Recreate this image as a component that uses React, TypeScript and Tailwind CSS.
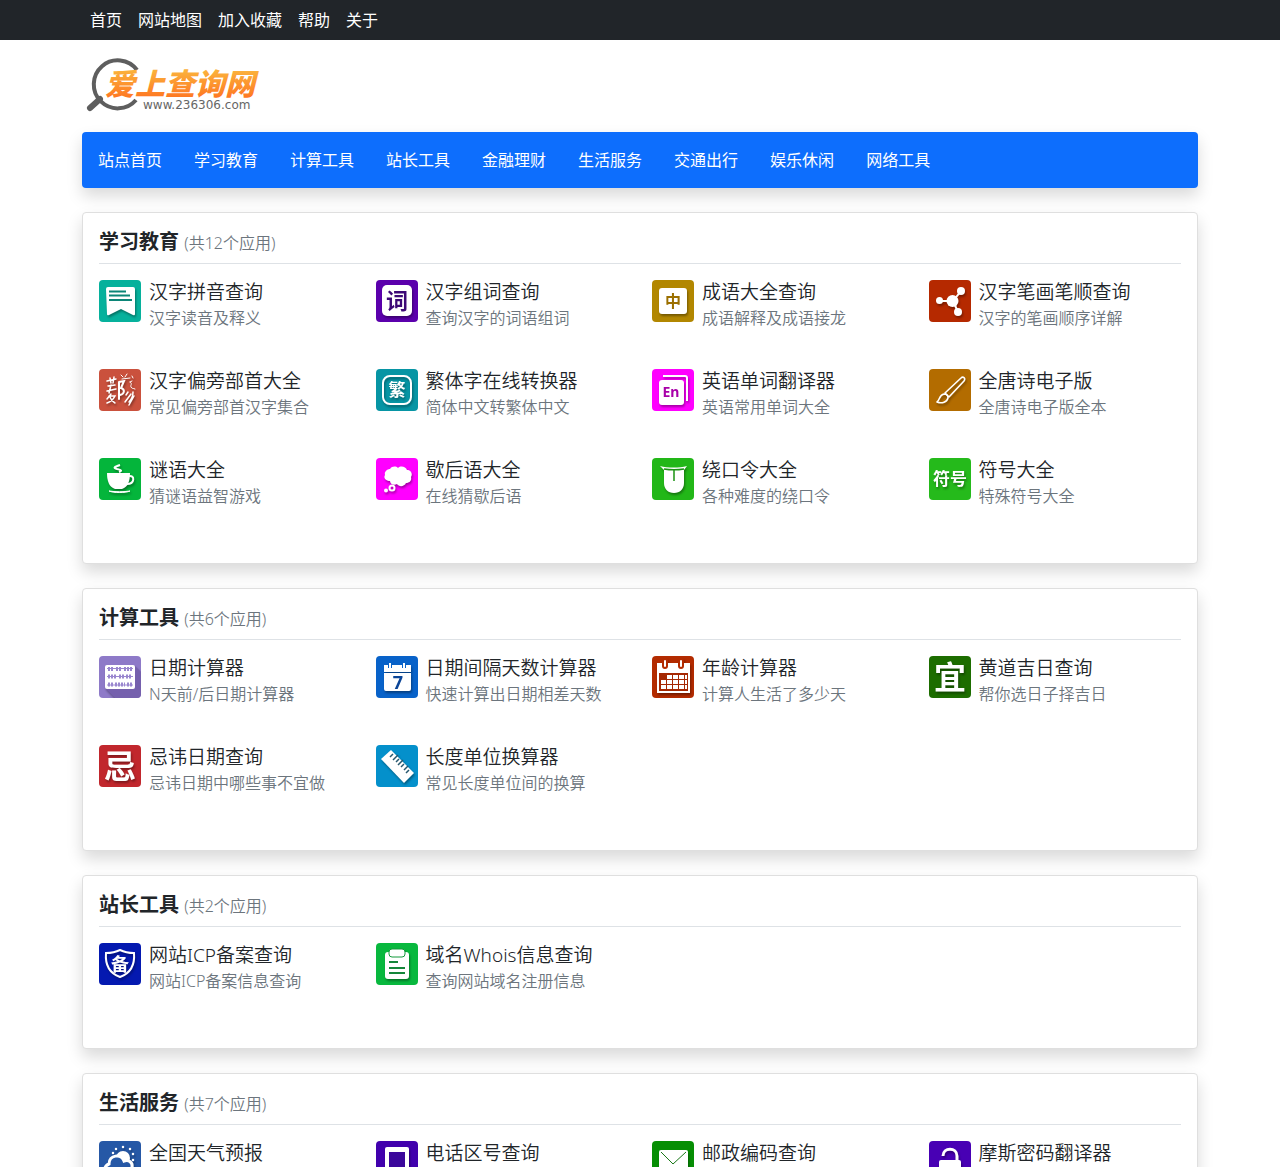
import { ReactNode } from "react";

interface Tool {
    name: string;
    desc?: string;
    icon: ReactNode;
    bg: string;
}

interface Category {
    title: string;
    count: number;
    tools: Tool[];
}

const topLinks = ["首页", "网站地图", "加入收藏", "帮助", "关于"];

const navLinks = ["站点首页", "学习教育", "计算工具", "站长工具", "金融理财", "生活服务", "交通出行", "娱乐休闲", "网络工具"];

/**
 * Single or double character centered in an icon tile
 */
function Glyph({ text, size, fill = "#fff", x = 21, y = 21 }: { text: string; size: number; fill?: string; x?: number; y?: number }) {
    return (
        <text x={x} y={y + size * 0.37} fontSize={size} fontWeight="700" fill={fill} textAnchor="middle">
            {text}
        </text>
    );
}

const categories: Category[] = [
    {
        title: "学习教育",
        count: 12,
        tools: [
            {
                name: "汉字拼音查询",
                desc: "汉字读音及释义",
                bg: "bg-[#06b19c]",
                icon: (
                    <>
                        <path d="M9 7h25a2 2 0 0 1 2 2v25q0 2-2 1l-12-6-12 6q-2 1-2-1l-1-25a2 2 0 0 1 2-2z" fill="#fff" />
                        <path d="M10 11.5h17M10 15.5h21M10 20h23" stroke="#0c8577" strokeWidth="2" />
                    </>
                ),
            },
            {
                name: "汉字组词查询",
                desc: "查询汉字的词语组词",
                bg: "bg-[#5b00ac]",
                icon: (
                    <>
                        <rect x="6" y="5" width="30" height="31" rx="5" fill="#fff" />
                        <Glyph text="词" size={22} fill="#3c0876" />
                    </>
                ),
            },
            {
                name: "成语大全查询",
                desc: "成语解释及成语接龙",
                bg: "bg-[#b28700]",
                icon: (
                    <>
                        <rect x="7" y="8" width="28" height="26" rx="3" fill="#fff" />
                        <Glyph text="中" size={16} fill="#9b6f00" />
                    </>
                ),
            },
            {
                name: "汉字笔画笔顺查询",
                desc: "汉字的笔画顺序详解",
                bg: "bg-[#b52900]",
                icon: (
                    <>
                        <path d="M10 21h14l8-10M24 21l5 11" stroke="#fff" strokeWidth="2" fill="none" />
                        <g fill="#fff">
                            <circle cx="23.500" cy="21" r="6" />
                            <circle cx="32" cy="11" r="4" />
                            <circle cx="10.500" cy="20.500" r="3.500" />
                            <circle cx="29" cy="32" r="4" />
                        </g>
                    </>
                ),
            },
            {
                name: "汉字偏旁部首大全",
                desc: "常见偏旁部首汉字集合",
                bg: "bg-[#ca513d]",
                icon: (
                    <g stroke="#fff" strokeWidth="1.500" fill="none" strokeLinecap="round">
                        <path d="M8 12l9-2M11 9l1 5M15 8l-1 6M9 17l7-1M8 22l9-2M12 16l-2 8" />
                        <path d="M12 25l-4 5M10 27h6c-2 4-5 6-8 7M11 28c1 3 3 5 5 6" />
                        <path d="M20 13v17M20 13l5-1-3 7c4 1 4 6-1 7" strokeWidth="2" />
                        <path d="M22 6l2 2M28 5l-2 3M23 10l8-1M33 7l1 2M31 13l2-1M31 13c3 2 0 3 1 5 1 2 2 1 4 2" strokeWidth="1" />
                        <path d="M29 23l-2 3M34 23c0 4-1 7-4 10M32 25l-6 8M35 27l-5 9" />
                    </g>
                ),
            },
            {
                name: "繁体字在线转换器",
                desc: "简体中文转繁体中文",
                bg: "bg-[#0795a4]",
                icon: (
                    <>
                        <rect x="7" y="7" width="28" height="28" rx="7" fill="none" stroke="#fff" strokeWidth="2" />
                        <Glyph text="繁" size={17} />
                    </>
                ),
            },
            {
                name: "英语单词翻译器",
                desc: "英语常用单词大全",
                bg: "bg-[#f0f]",
                icon: (
                    <>
                        <path d="M11 7h22a2 2 0 0 1 2 2v23" fill="none" stroke="#fff" strokeWidth="2" />
                        <rect x="7" y="11" width="25" height="25" rx="3" fill="#fff" />
                        <Glyph text="En" size={14} fill="#a800a8" x={19} y={23} />
                    </>
                ),
            },
            {
                name: "全唐诗电子版",
                desc: "全唐诗电子版全本",
                bg: "bg-[#b36c00]",
                icon: (
                    <g fill="none" stroke="#fff" strokeWidth="1.600" strokeLinejoin="round">
                        <path d="M16 24L32 9c2-2 5 0 3 3L20 28z" />
                        <path d="M15 25c3 0 4 2 4 4-1 4-6 6-11 4 3-2 2-7 7-8z" />
                    </g>
                ),
            },
            {
                name: "谜语大全",
                desc: "猜谜语益智游戏",
                bg: "bg-[#04b53b]",
                icon: (
                    <>
                        <path d="M8 15h23c0 8-2 14-8 16h-7c-6-2-8-8-8-16z" fill="#fff" />
                        <path d="M30 18c6-1 6 8-2 8" fill="none" stroke="#fff" strokeWidth="2" />
                        <path d="M21 7c-6 2-7 3-3 4 5 1 5 2 2 3" fill="none" stroke="#fff" strokeWidth="2" />
                        <path d="M10 33c6 1 15 1 21 0-4 2-17 2-21 0z" fill="#fff" stroke="#fff" />
                    </>
                ),
            },
            {
                name: "歇后语大全",
                desc: "在线猜歇后语",
                bg: "bg-[#f0f]",
                icon: (
                    <>
                        <path d="M14 11c2-3 6-3 8-1 3-3 8-1 9 2 4 0 6 4 4 7 1 4-2 6-5 6-2 4-7 4-9 1-3 2-7 0-7-3-4 0-7-3-5-6-1-3 2-6 5-6z" fill="#fff" />
                        <circle cx="16" cy="30" r="2.500" fill="none" stroke="#fff" strokeWidth="2" />
                        <circle cx="10" cy="32.500" r="2" fill="#fff" />
                    </>
                ),
            },
            {
                name: "绕口令大全",
                desc: "各种难度的绕口令",
                bg: "bg-[#22b718]",
                icon: (
                    <>
                        <path d="M8 8c8 2 19 2 27 0l-3 4v13c0 6-4 10-10 10s-10-4-10-10V12z" fill="#fff" />
                        <path d="M22 12v11M12 11c6 1 14 1 20 0" stroke="#1b9312" strokeWidth="1.500" fill="none" />
                    </>
                ),
            },
            {
                name: "符号大全",
                desc: "特殊符号大全",
                bg: "bg-[#25ba1b]",
                icon: <Glyph text="符号" size={17} />,
            },
        ],
    },
    {
        title: "计算工具",
        count: 6,
        tools: [
            {
                name: "日期计算器",
                desc: "N天前/后日期计算器",
                bg: "bg-[#8e7ac8]",
                icon: (
                    <>
                        <path d="M36 10l6 6v26H16l-9-9z" fill="#7560ad" />
                        <rect x="6" y="9" width="30" height="24" rx="2" fill="#fff" />
                        <path d="M8 12.500h26M8 20.500h26M8 29h26" stroke="#9a87cf" strokeWidth="1" />
                        <path d="M9 13h6M17 13h5M25 13h8M9 20.500h9M20 20.500h5M27 20.500h6M9 28.500h5M16 28.500h10M28 28.500h5" stroke="#9a87cf" strokeWidth="4" strokeDasharray="2 1" />
                    </>
                ),
            },
            {
                name: "日期间隔天数计算器",
                desc: "快速计算出日期相差天数",
                bg: "bg-[#0862c9]",
                icon: (
                    <>
                        <path d="M8 9h27v7H8zM8 17h27v16a2 2 0 0 1-2 2H10a2 2 0 0 1-2-2z" fill="#fff" />
                        <path d="M14 7v5M28 7v5" stroke="#0862c9" strokeWidth="4" />
                        <path d="M14 7v5M28 7v5" stroke="#fff" strokeWidth="2" />
                        <Glyph text="7" size={18} fill="#0b4597" x={22} y={26} />
                    </>
                ),
            },
            {
                name: "年龄计算器",
                desc: "计算人生活了多少天",
                bg: "bg-[#b32b00]",
                icon: (
                    <>
                        <path d="M5 7h33v30H5z" fill="#fff" />
                        <path d="M7 17h29v18H7z" fill="#a52802" />
                        <path d="M13 5v5M29 5v5" stroke="#b32b00" strokeWidth="6" strokeLinecap="round" />
                        <path d="M13 5v5M29 5v5" stroke="#fff" strokeWidth="2" strokeLinecap="round" />
                        <path d="M15 21h20M9 26h26M9 31h26" stroke="#fff" strokeWidth="4" strokeDasharray="5 1" />
                    </>
                ),
            },
            {
                name: "黄道吉日查询",
                desc: "帮你选日子择吉日",
                bg: "bg-[#1d6d00]",
                icon: <Glyph text="宜" size={32} />,
            },
            {
                name: "忌讳日期查询",
                desc: "忌讳日期中哪些事不宜做",
                bg: "bg-[#c1272d]",
                icon: <Glyph text="忌" size={32} />,
            },
            {
                name: "长度单位换算器",
                desc: "常见长度单位间的换算",
                bg: "bg-[#0490cb]",
                icon: (
                    <>
                        <path d="M5 14L15 5l23 23-10 10z" fill="#fff" />
                        <path d="M14 12l3-3M17 15l5-5M20 17l3-3M22 20l5-5M25 22l3-3M28 25l4-4M30 28l3-3" stroke="#26576e" strokeWidth="1.500" />
                    </>
                ),
            },
        ],
    },
    {
        title: "站长工具",
        count: 2,
        tools: [
            {
                name: "网站ICP备案查询",
                desc: "网站ICP备案信息查询",
                bg: "bg-[#0419b0]",
                icon: (
                    <>
                        <path d="M21 7c4 2 9 3 14 3 1 12-3 20-14 24C10 30 6 22 7 10c5 0 10-1 14-3z" fill="none" stroke="#fff" strokeWidth="2" />
                        <Glyph text="备" size={18} />
                    </>
                ),
            },
            {
                name: "域名Whois信息查询",
                desc: "查询网站域名注册信息",
                bg: "bg-[#08b83e]",
                icon: (
                    <>
                        <rect x="9" y="9" width="24" height="27" rx="3" fill="#fff" />
                        <rect x="13" y="6" width="16" height="8" rx="3" fill="#fff" stroke="#149a3d" />
                        <path d="M13 19h9M13 25h16M13 30h16" stroke="#15863a" strokeWidth="2" />
                    </>
                ),
            },
        ],
    },
    {
        title: "生活服务",
        count: 7,
        tools: [
            {
                name: "全国天气预报",
                bg: "bg-[#2658a6]",
                icon: (
                    <>
                        <path d="M24 6h0M17 8h0M31 8h0M14 12h0M34 13h0M34 19h0" stroke="#fff" strokeWidth="2.500" strokeLinecap="round" />
                        <circle cx="24" cy="17" r="7" fill="#fff" />
                        <path d="M9 34c-5-3-4-9 1-11 0-9 12-11 15-3 5-2 9 2 8 6 4 3 2 8-2 8z" fill="#2658a6" stroke="#fff" strokeWidth="3" />
                    </>
                ),
            },
            {
                name: "电话区号查询",
                bg: "bg-[#4100ad]",
                icon: (
                    <>
                        <rect x="9" y="6" width="24" height="34" rx="2" fill="#fff" />
                        <path d="M13 11h16v23H13z" fill="#3b079b" />
                    </>
                ),
            },
            {
                name: "邮政编码查询",
                bg: "bg-[#068e04]",
                icon: (
                    <>
                        <rect x="7" y="9" width="29" height="25" rx="2" fill="#fff" />
                        <path d="M9 11l12 12 13-12" fill="none" stroke="#197818" strokeWidth="1" />
                    </>
                ),
            },
            {
                name: "摩斯密码翻译器",
                bg: "bg-[#4800b4]",
                icon: (
                    <>
                        <path d="M14 15c0-9 14-9 14 0v4" fill="none" stroke="#fff" strokeWidth="3" />
                        <rect x="10" y="19" width="22" height="17" rx="2" fill="#fff" />
                    </>
                ),
            },
        ],
    },
];

function Logo() {
    return (
        <svg className="block w-[180px] h-[60px]" viewBox="0 0 180 60" role="img" aria-label="爱上查询网">
            <defs>
                <linearGradient id="logo-text" x1="0" y1="0" x2="0" y2="1">
                    <stop offset="0.200" stopColor="#fbb03b" />
                    <stop offset="1" stopColor="#ff6a1c" />
                </linearGradient>
            </defs>
            <path d="M55 14A24 24 0 1 0 54 44" fill="none" stroke="#5e5e5e" strokeWidth="4" />
            <path d="M18 43L8 52" stroke="#5e5e5e" strokeWidth="6" strokeLinecap="round" />
            <text x="23" y="39" fontSize="30" fontWeight="900" fontStyle="italic" fill="url(#logo-text)">
                爱上查询网
            </text>
            <text x="61" y="53" fontSize="12" fill="#666" className="font-['DejaVu_Sans']">
                www.236306.com
            </text>
        </svg>
    );
}

function ToolItem({ tool }: { tool: Tool }) {
    return (
        <a href="#" className="flex gap-2 pb-[39px]">
            <svg className={`w-[42px] h-[42px] shrink-0 rounded ${tool.bg}`} viewBox="0 0 42 42" aria-hidden="true">
                <g className="drop-shadow-[1px_2px_1px_rgba(0,0,0,0.35)]">{tool.icon}</g>
            </svg>
            <div className="min-w-0">
                <h3 className="text-[19px] leading-6 text-[#212529] font-[350]">{tool.name}</h3>
                {tool.desc && <p className="mt-0.5 leading-6 text-[#6c757d] font-[350]">{tool.desc}</p>}
            </div>
        </a>
    );
}

function CategoryCard({ category }: { category: Category }) {
    return (
        <section className="mb-6 p-4 pb-0 bg-white border border-[#dfdfdf] rounded shadow-[0_8px_16px_rgba(0,0,0,0.15)]">
            <h2 className="mb-4 pb-2 text-xl leading-[26px] font-bold border-b border-[#dee2e6]">
                {category.title} <small className="text-base leading-6 font-[350] text-[#6c757d]">(共{category.count}个应用)</small>
            </h2>
            <div className="grid grid-cols-4 gap-x-6 pb-4">
                {category.tools.map((tool) => (
                    <ToolItem key={tool.name} tool={tool} />
                ))}
            </div>
        </section>
    );
}

export default function App() {
    return (
        <div className="min-h-screen bg-white text-base text-[#212529] font-['Noto_Sans','Noto_Sans_CJK_SC',sans-serif]">
            <div className="bg-[#212529]">
                <div className="max-w-[1140px] mx-auto px-3">
                    <div className="flex h-10 items-center">
                        {topLinks.map((link) => (
                            <a key={link} href="#" className="px-2 leading-6 text-white">{link}</a>
                        ))}
                    </div>
                </div>
            </div>

            <div className="max-w-[1140px] mx-auto px-3">
                <header className="pt-4 pb-4">
                    <a href="#" className="inline-block align-top">
                        <Logo />
                    </a>
                </header>

                <nav className="flex h-14 mb-6 items-center bg-[#0d6efd] rounded shadow-[0_8px_16px_rgba(0,0,0,0.15)]">
                    {navLinks.map((link) => (
                        <a key={link} href="#" className="px-4 leading-6 text-white">{link}</a>
                    ))}
                </nav>

                <main>
                    {categories.map((category) => (
                        <CategoryCard key={category.title} category={category} />
                    ))}
                </main>
            </div>
        </div>
    );
}
